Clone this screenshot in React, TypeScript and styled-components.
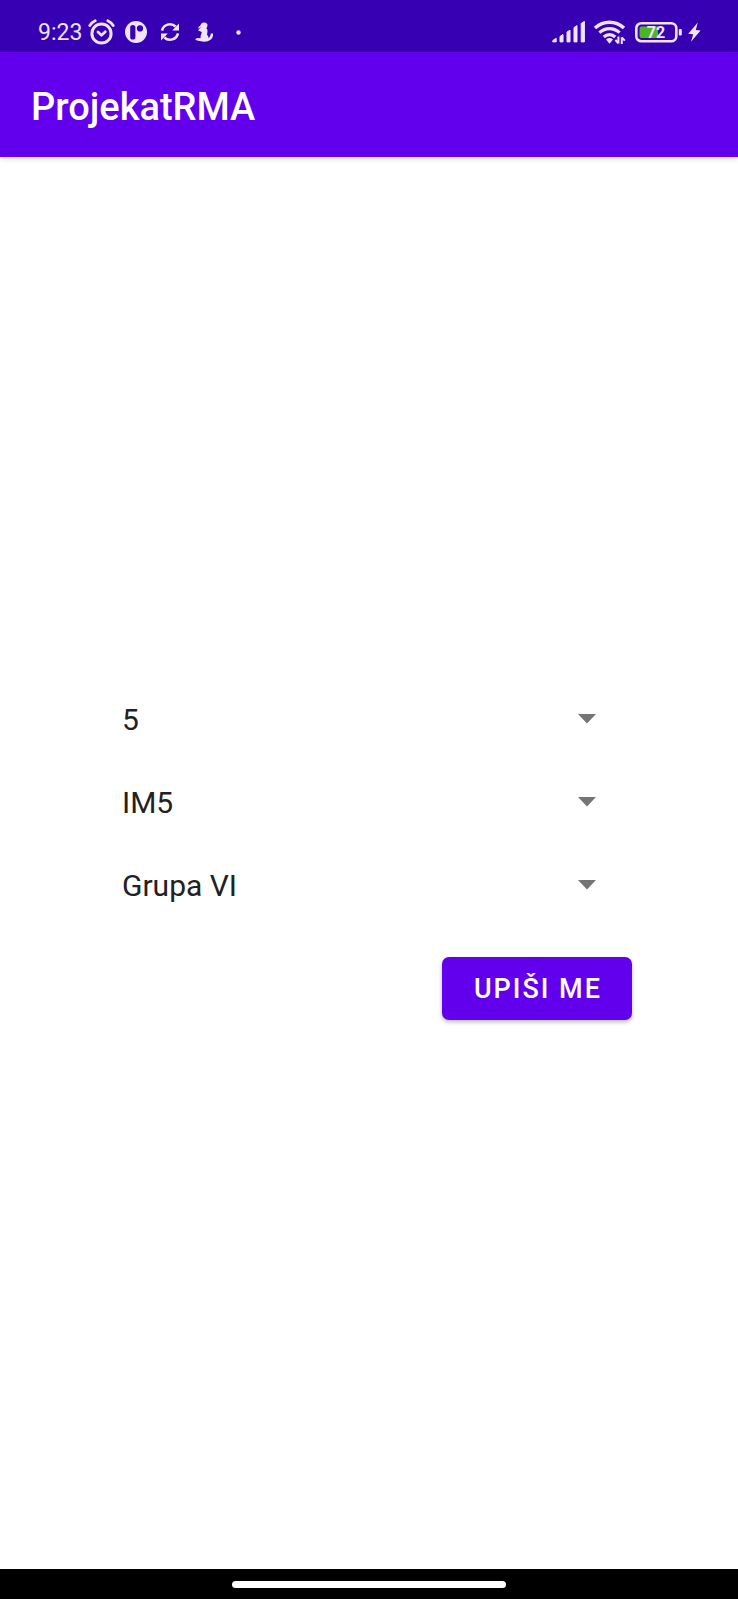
import React from 'react';
import styled, { createGlobalStyle } from 'styled-components';

const GlobalStyle = createGlobalStyle`
  *, *::before, *::after { box-sizing: border-box; }
  body {
    margin: 0;
    background: #ffffff;
    font-family: Roboto, "Liberation Sans", sans-serif;
  }
`;

const Screen = styled.div`
  display: flex;
  flex-direction: column;
  min-height: 100vh;
`;

const StatusBar = styled.div`
  display: flex;
  align-items: center;
  justify-content: space-between;
  height: 52px;
  padding: 12px 36px 0 38px;
  background: #3700b3;
  color: #efe3ff;
`;

const StatusGroup = styled.div<{ $gap?: number }>`
  display: flex;
  align-items: center;
  gap: ${({ $gap = 0 }) => $gap}px;

  svg {
    display: block;
  }
`;

const Clock = styled.time`
  min-width: 47px;
  padding-top: 2px;
  font-size: 23px;
  line-height: 28px;
`;

const IconSlot = styled.span`
  display: flex;
  justify-content: center;
  width: 34px;
`;

const BatteryLevel = styled.text`
  font-family: Roboto, "Liberation Sans", sans-serif;
  font-size: 16px;
  font-weight: 700;
`;

const AppBar = styled.header`
  display: flex;
  align-items: center;
  height: 105px;
  padding: 4px 31px 0;
  background: #6200ee;
  box-shadow: 0 1px 6px rgba(0, 0, 0, 0.2);
`;

const Title = styled.h1`
  margin: 0;
  color: #ffffff;
  font-size: 38px;
  font-weight: 500;
  line-height: 44px;
`;

const Main = styled.main`
  flex: 1;
  display: flex;
  flex-direction: column;
  justify-content: center;
  padding: 0 106px 10px;
`;

const Form = styled.form`
  display: flex;
  flex-direction: column;
  gap: 38px;
`;

const SpinnerField = styled.label`
  display: grid;
  grid-template-columns: 1fr 90px;
  align-items: center;
  height: 45px;

  svg {
    grid-area: 1 / 2;
    justify-self: center;
    pointer-events: none;
  }
`;

const Spinner = styled.select`
  grid-area: 1 / 1 / 2 / 3;
  width: 100%;
  height: 45px;
  padding: 2px 90px 0 16px;
  border: 0;
  border-radius: 0;
  appearance: none;
  background: transparent;
  color: #212121;
  font: 400 30px/40px Roboto, "Liberation Sans", sans-serif;
`;

const SubmitButton = styled.button`
  align-self: flex-end;
  height: 63px;
  margin-top: 11px;
  padding: 2px 30px 0 32px;
  border: 0;
  border-radius: 7px;
  background: #6200ee;
  box-shadow: 0 2px 4px rgba(0, 0, 0, 0.28);
  color: #ffffff;
  font: 500 27px/32px Roboto, "Liberation Sans", sans-serif;
  letter-spacing: 2px;
`;

const NavigationBar = styled.footer`
  display: flex;
  align-items: center;
  justify-content: center;
  height: 30px;
  background: #000000;
`;

const HomeHandle = styled.span`
  width: 37%;
  height: 7px;
  border-radius: 4px;
  background: #ffffff;
`;

const AlarmIcon = () => (
  <svg width="28" height="26" viewBox="0 0 28 26" fill="none" stroke="currentColor" strokeLinecap="round" aria-hidden="true">
    <circle cx="13.5" cy="14.500" r="9.600" strokeWidth="3" />
    <path d="M1.800 6.600Q3.800 3.400 7.200 1.800M25.200 6.600Q23.200 3.400 19.800 1.800" strokeWidth="2.800" />
    <path d="M10 13l3.500 3.200 3.800-3.400" strokeWidth="2.800" strokeLinejoin="round" />
  </svg>
);

const PeriodIcon = () => (
  <svg width="22" height="22" viewBox="0 0 22 22" aria-hidden="true">
    <circle cx="11" cy="11" r="11" fill="currentColor" />
    <path d="M5.200 6.600q0-2.600 2.600-2.600t2.600 2.600v9.400q0 2.600-2.600 2.600T5.200 16z" fill="#3700b3" />
    <circle cx="15" cy="7.400" r="3.100" fill="#3700b3" />
  </svg>
);

const SyncIcon = () => (
  <svg width="20" height="20" viewBox="0 0 20 20" fill="currentColor" aria-hidden="true">
    <path d="M2 8.600A8.200 8.200 0 0 1 15.600 4.500M18 11.400A8.200 8.200 0 0 1 4.400 15.500" fill="none" stroke="currentColor" strokeWidth="2.600" />
    <path d="M19 1.600v7h-6.800zM1 18.400v-7h6.800z" />
  </svg>
);

const FigureIcon = () => (
  <svg width="20" height="20" viewBox="0 0 20 20" fill="currentColor" aria-hidden="true">
    <path d="M9.800.4q3.400-.2 3.700 2.700 0 2-1.200 3.200 1.500.9 1.200 3.200l-.5 3.300q1.700 1.400 1.600 3.400 2.200-1.600 2.200-4.600l2.200-.2q.5 4-2.500 6.400-2.700 2-6.500 1.900l-4.600-.7q-2.600-.3-4.200-1.400.6-1.500 2.300-1.500l3.100.2q-.4-2.400.8-4.600l.4-1.800-3.700-1.500q1.200-2.400 3.500-3.100-1.800.3-3.500 1.100.1-1.900 2.100-2.600Q7 .6 9.800.4z" />
  </svg>
);

const DotIcon = () => (
  <svg width="5" height="5" viewBox="0 0 5 5" aria-hidden="true">
    <circle cx="2.500" cy="2.500" r="2.200" fill="currentColor" />
  </svg>
);

const SignalIcon = () => (
  <svg width="35" height="22" viewBox="0 0 35 22" fill="currentColor" stroke="currentColor" strokeWidth="1" strokeLinejoin="round" aria-hidden="true">
    <path d="M.8 20.900v-1.400L4.200 17.300v3.600zM8 20.900v-5.400l3-2v7.400zM15 20.900v-9.800l3-2v11.800zM22 20.900V6.600l3-2v16.300zM29.200 20.900V2.400l3.200-2v20.500z" />
  </svg>
);

const WifiIcon = () => (
  <svg width="35" height="24" viewBox="0 0 35 24" fill="none" stroke="currentColor" aria-hidden="true">
    <path d="M2 8Q8.400 2.200 16.500 2.200T31 8" strokeWidth="3.600" />
    <path d="M6.400 12.600Q11 8.600 16.500 8.600t10.100 4" strokeWidth="3.200" />
    <path d="M10.800 17q2.600-2.400 5.700-2.400t5.700 2.400" strokeWidth="3.200" />
    <path d="M13 19.400q3.500-2.800 7 0L16.500 23.800z" fill="currentColor" stroke="none" />
    <path d="M25.400 16.600v6.800M25.400 23.200l-3-3.200M28.800 24v-6.800M28.800 17.400l3 3.200" strokeWidth="2" />
  </svg>
);

const BatteryIcon = () => (
  <svg width="48" height="22" viewBox="0 0 48 22" role="img" aria-label="72%">
    <rect x="2.300" y="2.300" width="40" height="17.900" rx="5" fill="none" stroke="currentColor" strokeWidth="2.600" />
    <path d="M7.500 5.500H24v11.500H7.500Q5.500 17 5.500 15V7.500Q5.500 5.500 7.500 5.500z" fill="#4cb71d" />
    <rect x="44.800" y="8" width="3" height="6.500" rx="1" fill="currentColor" />
    <BatteryLevel x="22" y="17" textAnchor="middle" fill="currentColor">72</BatteryLevel>
  </svg>
);

const BoltIcon = () => (
  <svg width="14" height="20" viewBox="0 0 14 20" fill="currentColor" aria-hidden="true">
    <path d="M9.800.5L.2 11.800l5 .4L3 19.800 12.600 8.600l-4.800-.6z" />
  </svg>
);

const CaretIcon = () => (
  <svg width="18" height="10" viewBox="0 0 18 10" aria-hidden="true">
    <path d="M0 0h18L9 9.500z" fill="#757575" />
  </svg>
);

const fields = [
  { name: 'semestar', label: 'Semestar', value: '5' },
  { name: 'predmet', label: 'Predmet', value: 'IM5' },
  { name: 'grupa', label: 'Grupa', value: 'Grupa VI' },
];

export default function App() {
  return (
    <Screen>
      <GlobalStyle />
      <StatusBar>
        <StatusGroup>
          <Clock>9:23</Clock>
          <IconSlot><AlarmIcon /></IconSlot>
          <IconSlot><PeriodIcon /></IconSlot>
          <IconSlot><SyncIcon /></IconSlot>
          <IconSlot><FigureIcon /></IconSlot>
          <IconSlot><DotIcon /></IconSlot>
        </StatusGroup>
        <StatusGroup $gap={6}>
          <SignalIcon />
          <WifiIcon />
          <BatteryIcon />
          <BoltIcon />
        </StatusGroup>
      </StatusBar>
      <AppBar>
        <Title>ProjekatRMA</Title>
      </AppBar>
      <Main>
        <Form onSubmit={(event: React.FormEvent) => event.preventDefault()}>
          {fields.map(({ name, label, value }) => (
            <SpinnerField key={name}>
              <Spinner name={name} aria-label={label} defaultValue={value}>
                <option value={value}>{value}</option>
              </Spinner>
              <CaretIcon />
            </SpinnerField>
          ))}
          <SubmitButton type="submit">UPIŠI ME</SubmitButton>
        </Form>
      </Main>
      <NavigationBar>
        <HomeHandle />
      </NavigationBar>
    </Screen>
  );
}
